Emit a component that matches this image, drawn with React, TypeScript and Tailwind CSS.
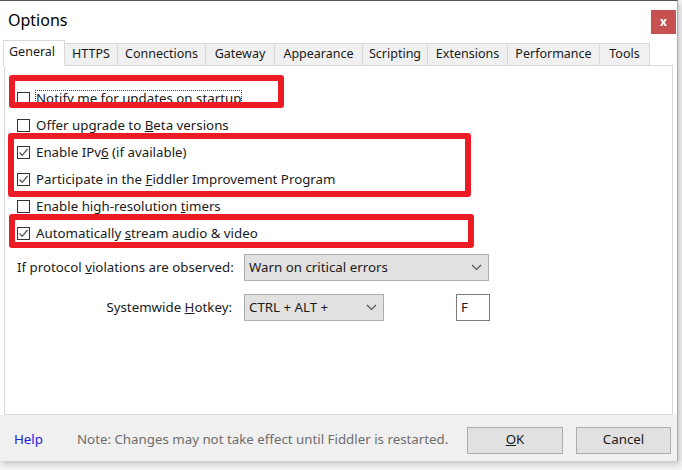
import React from "react";

const font = { fontFamily: '"Noto Sans", "Segoe UI", sans-serif' };

function CheckBox({ checked }: { checked: boolean }) {
  return (
    <div className="w-[13px] h-[13px] border border-[#333] bg-white flex items-center justify-center shrink-0">
      {checked && (
        <svg width="11" height="11" viewBox="0 0 11 11">
          <path d="M1.5 5.5 L4.2 8.3 L9.5 2" stroke="#555" strokeWidth="1.3" fill="none" />
        </svg>
      )}
    </div>
  );
}

function Row({ checked, children, focus }: { checked: boolean; children: React.ReactNode; focus?: boolean }) {
  return (
    <div className="h-[27px] flex items-center gap-[6px] pl-[12px]">
      <CheckBox checked={checked} />
      <span className={focus ? "outline outline-1 outline-dotted outline-[#444] leading-[15px]" : "leading-[15px]"}>{children}</span>
    </div>
  );
}

const tabs = [
  ["General", 62],
  ["HTTPS", 53],
  ["Connections", 88],
  ["Gateway", 69],
  ["Appearance", 88],
  ["Scripting", 65],
  ["Extensions", 80],
  ["Performance", 92],
  ["Tools", 50],
] as const;

function Chevron() {
  return (
    <svg width="11" height="7" viewBox="0 0 11 7">
      <path d="M1 1 L5.5 5.5 L10 1" stroke="#555" strokeWidth="1.2" fill="none" />
    </svg>
  );
}

export default function App() {
  return (
    <div className="w-[682px] h-[470px] bg-[#f4f4f4] relative overflow-hidden text-[13.3px] text-[#1a1a1a]" style={font}>
      <div className="w-[678px] h-[461px] bg-white border-t border-[#555] border-r border-r-[#aaa] flex flex-col shadow-[2px_3px_6px_rgba(0,0,0,0.2)]">
        {/* title bar */}
        <div className="h-[38px] flex items-center justify-between pl-[8px] pr-[1px]">
          <span className="text-[16px] text-black">Options</span>
          <div className="w-[25px] h-[24px] bg-[#c75050] flex items-center justify-center text-white text-[12px] font-bold self-start mt-[9px]">
            x
          </div>
        </div>
        {/* tabs */}
        <div className="flex items-end pl-[3px] h-[26px] text-[12.5px]">
          {tabs.map(([t, w], i) =>
            i === 0 ? (
              <div
                key={t}
                className="h-[26px] bg-white border border-[#d9d9d9] border-b-0 flex items-center px-[5px] relative z-10 -mb-px"
                style={{ width: w }}
              >
                <span className="-mt-[3px]">{t}</span>
              </div>
            ) : (
              <div
                key={t}
                className="h-[22px] bg-[#f0f0f0] border border-[#d9d9d9] border-l-0 border-b-0 flex items-center justify-center"
                style={{ width: w }}
              >
                {t}
              </div>
            )
          )}
        </div>
        {/* content panel */}
        <div className="mx-[4px] mr-[4px] h-[350px] border border-[#d9d9d9] bg-white flex flex-col pt-[19px] relative">
          <Row checked={false} focus>
            Notify me for updates on startup
          </Row>
          <Row checked={false}>
            Offer upgrade to <u>B</u>eta versions
          </Row>
          <Row checked={true}>
            Enable IPv<u>6</u> (if available)
          </Row>
          <Row checked={true}>
            Participate in the <u>F</u>iddler Improvement Program
          </Row>
          <Row checked={false}>
            Enable high-resolution <u>t</u>imers
          </Row>
          <Row checked={true}>
            Automatically <u>s</u>tream audio &amp; video
          </Row>

          <div className="flex items-center mt-[7px] pl-[12px] h-[27px]">
            <span className="w-[227px]">
              If protocol <u>v</u>iolations are observed:
            </span>
            <div className="w-[245px] h-[27px] bg-[#e1e1e1] border border-[#adadad] flex items-center justify-between pl-[4px] pr-[6px]">
              <span>Warn on critical errors</span>
              <Chevron />
            </div>
          </div>
          <div className="flex items-center mt-[13px] h-[27px]">
            <span className="w-[239px] text-right pr-[12px]">
              Systemwide <u>H</u>otkey:
            </span>
            <div className="w-[140px] h-[27px] bg-[#e1e1e1] border border-[#adadad] flex items-center justify-between pl-[4px] pr-[6px]">
              <span>CTRL + ALT +</span>
              <Chevron />
            </div>
            <div className="ml-[72px] w-[34px] h-[27px] border border-[#7a7a7a] bg-white flex items-center pl-[4px]">F</div>
          </div>

          {/* annotation boxes */}
          <div className="absolute left-[4px] top-[9px] w-[275px] h-[33px] border-[6px] border-[#ed1c24] rounded-[3px]" />
          <div className="absolute left-[3px] top-[67px] w-[463px] h-[64px] border-[6px] border-[#ed1c24] rounded-[3px]" />
          <div className="absolute left-[4px] top-[148px] w-[465px] h-[34px] border-[6px] border-[#ed1c24] rounded-[3px]" />
        </div>
        {/* bottom bar */}
        <div className="flex-1 bg-[#f0f0f0] flex items-center pl-[14px] pt-[4px]">
          <span className="text-[#2222dd] w-[63px]">Help</span>
          <span className="text-[#6d6d6d] w-[390px]">Note: Changes may not take effect until Fiddler is restarted.</span>
          <div className="w-[96px] h-[27px] bg-[#e1e1e1] border border-[#adadad] flex items-center justify-center">
            <u>O</u>K
          </div>
          <div className="ml-[13px] w-[95px] h-[27px] bg-[#e1e1e1] border border-[#adadad] flex items-center justify-center">
            Cancel
          </div>
        </div>
      </div>
    </div>
  );
}
